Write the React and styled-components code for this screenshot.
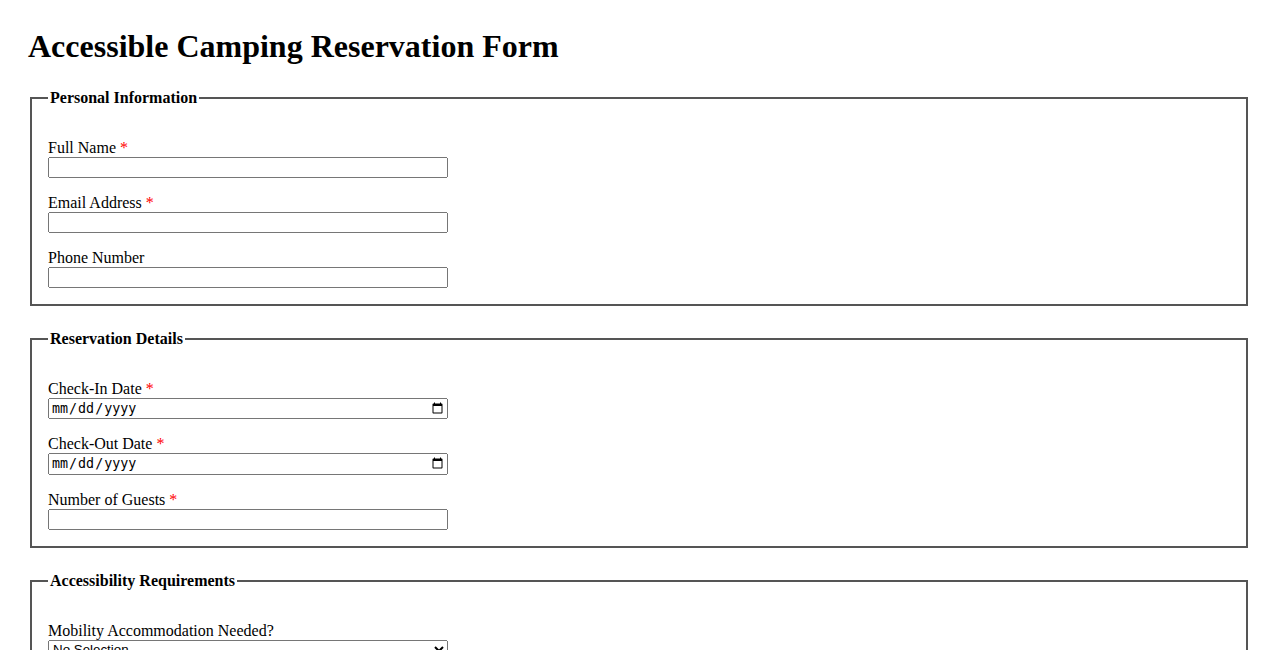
import React from "react";
import styled, { createGlobalStyle } from "styled-components";

const GlobalStyle = createGlobalStyle`
  body {
    margin: 8px;
    font-family: "Liberation Serif", "Times New Roman", serif;
    color: #000;
    background: #fff;
  }
`;

const Page = styled.main`
  padding: 20px;
`;

const Title = styled.h1`
  font-size: 32px;
  font-weight: bold;
  margin: 0 0 24px;
`;

const Section = styled.fieldset`
  margin: 0 2px 24px;
  padding: 16px 16px 0;
  border: 2px solid #555;
`;

const Legend = styled.legend`
  font-weight: bold;
  padding: 0 2px;
`;

const Field = styled.div`
  margin: 16px 0;
`;

const Label = styled.label`
  display: block;
`;

const Required = styled.span`
  color: red;
`;

const Input = styled.input`
  display: block;
  width: 400px;
  box-sizing: border-box;
  margin: 0;
`;

const Select = styled.select`
  display: block;
  width: 400px;
  margin: 0;
`;

const FormField = ({ id, label, required, type = "text" }) => (
  <Field>
    <Label htmlFor={id}>
      {label} {required && <Required aria-hidden="true">*</Required>}
    </Label>
    <Input id={id} type={type} required={required} />
  </Field>
);

export default function App() {
  return (
    <>
      <GlobalStyle />
      <Page>
        <Title>Accessible Camping Reservation Form</Title>
        <form>
          <Section>
            <Legend>Personal Information</Legend>
            <FormField id="name" label="Full Name" required />
            <FormField id="email" label="Email Address" type="email" required />
            <FormField id="phone" label="Phone Number" type="tel" />
          </Section>
          <Section>
            <Legend>Reservation Details</Legend>
            <FormField id="checkin" label="Check-In Date" type="date" required />
            <FormField id="checkout" label="Check-Out Date" type="date" required />
            <FormField id="guests" label="Number of Guests" type="number" required />
          </Section>
          <Section>
            <Legend>Accessibility Requirements</Legend>
            <Field>
              <Label htmlFor="mobility">Mobility Accommodation Needed?</Label>
              <Select id="mobility" defaultValue="">
                <option value="">No Selection</option>
                <option value="yes">Yes</option>
                <option value="no">No</option>
              </Select>
            </Field>
          </Section>
        </form>
      </Page>
    </>
  );
}
